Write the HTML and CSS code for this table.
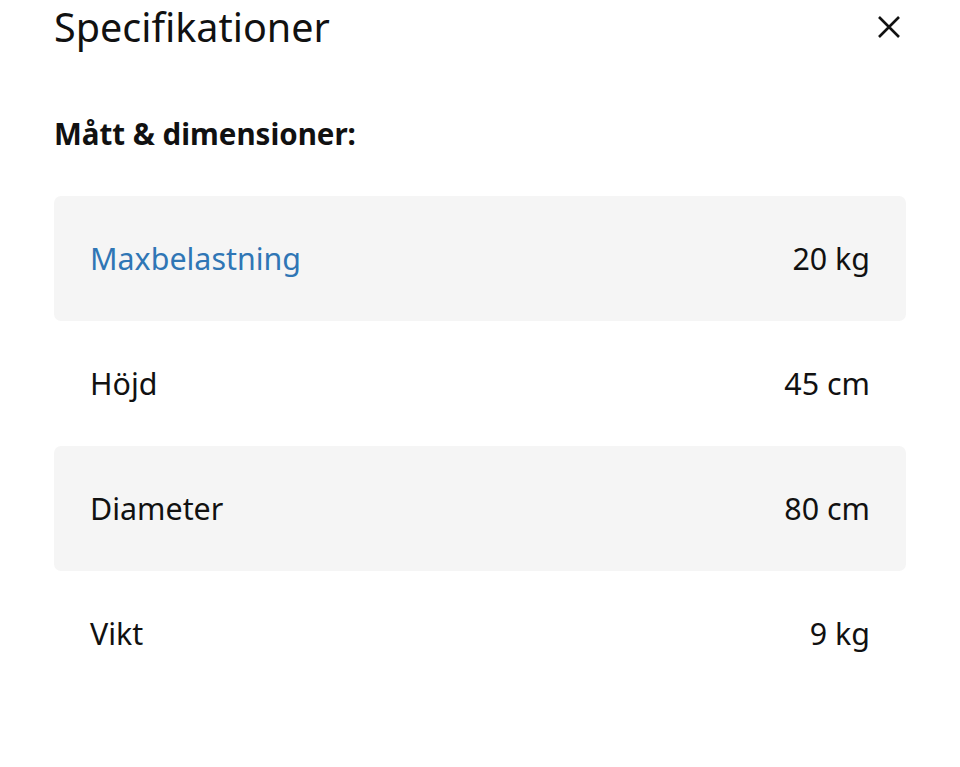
FILE: index.html
```html
<!DOCTYPE html>
<html lang="sv">
<head>
<meta charset="utf-8">
<title>Specifikationer</title>
<link rel="stylesheet" href="styles.css">
</head>
<body>
<div class="sheet">
  <header class="sheet-header">
    <h1 class="sheet-title">Specifikationer</h1>
    <button class="close-btn" aria-label="Stäng">
      <svg width="24" height="24" viewBox="0 0 24 24"><path d="M2 2 L22 22 M22 2 L2 22" stroke="#111" stroke-width="2.6" fill="none"/></svg>
    </button>
  </header>
  <h2 class="section-title">Mått &amp; dimensioner:</h2>
  <dl class="spec-list">
    <div class="spec-row shaded"><dt class="spec-name link">Maxbelastning</dt><dd class="spec-value">20 kg</dd></div>
    <div class="spec-row"><dt class="spec-name">Höjd</dt><dd class="spec-value">45 cm</dd></div>
    <div class="spec-row shaded"><dt class="spec-name">Diameter</dt><dd class="spec-value">80 cm</dd></div>
    <div class="spec-row"><dt class="spec-name">Vikt</dt><dd class="spec-value">9 kg</dd></div>
  </dl>
</div>
</body>
</html>
```
FILE: styles.css
```css
* { box-sizing: border-box; }
html, body { margin: 0; padding: 0; background: #fff; }
body {
  font-family: "Noto Sans", "Open Sans", sans-serif;
  color: #111;
}
.sheet {
  padding: 0 54px;
}
.sheet-header {
  display: flex;
  justify-content: space-between;
  align-items: center;
}
.sheet-title {
  margin: 0;
  font-size: 39.5px;
  font-weight: 400;
  line-height: 54px;
}
.close-btn {
  border: 0;
  background: none;
  padding: 0;
  margin-right: 5px;
  width: 24px;
  height: 24px;
  display: flex;
}
.section-title {
  margin: 60px 0 0;
  font-size: 29.5px;
  font-weight: 700;
  line-height: 40px;
}
.spec-list {
  margin: 42px 0 0;
  padding: 0;
}
.spec-row {
  display: flex;
  justify-content: space-between;
  align-items: center;
  height: 125px;
  padding: 0 36px;
  border-radius: 7px;
  font-size: 30.4px;
}
.spec-row.shaded { background: #f5f5f5; }
.spec-name, .spec-value { margin: 0; }
.link { color: #2f76b5; }
```
